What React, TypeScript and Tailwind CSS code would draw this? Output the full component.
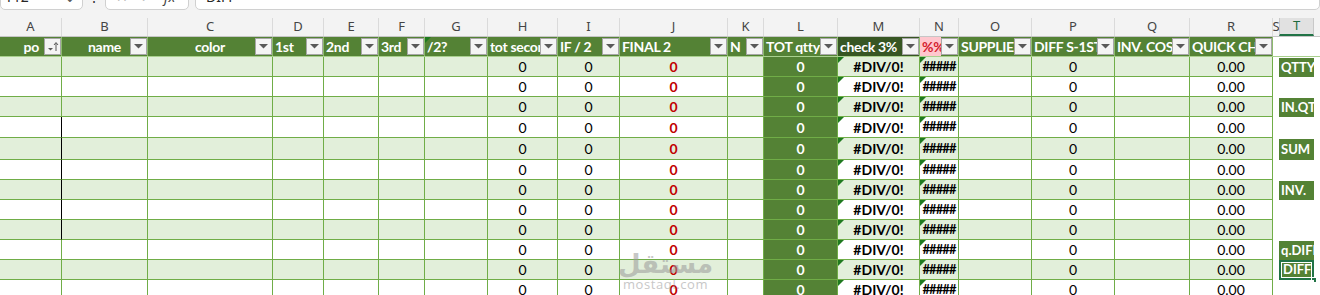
import React from 'react';

type Col = {
  letter: string;
  w: string;
  head: string;
  align: 'left' | 'center' | 'right';
  sort?: boolean;
  tri?: boolean;
  tone?: 'dark' | 'bad';
};

const cols: Col[] = [
  { letter: 'A', w: 'w-[62px]', head: 'po', align: 'right', sort: true },
  { letter: 'B', w: 'w-[86px]', head: 'name', align: 'center' },
  { letter: 'C', w: 'w-[125px]', head: 'color', align: 'center' },
  { letter: 'D', w: 'w-[51px]', head: '1st', align: 'left' },
  { letter: 'E', w: 'w-[55px]', head: '2nd', align: 'left' },
  { letter: 'F', w: 'w-[46px]', head: '3rd', align: 'left' },
  { letter: 'G', w: 'w-[63px]', head: '/2?', align: 'left', tri: true },
  { letter: 'H', w: 'w-[70px]', head: 'tot second', align: 'left' },
  { letter: 'I', w: 'w-[62px]', head: 'IF / 2', align: 'left' },
  { letter: 'J', w: 'w-[108px]', head: 'FINAL 2', align: 'left' },
  { letter: 'K', w: 'w-[36px]', head: 'N', align: 'left' },
  { letter: 'L', w: 'w-[74px]', head: 'TOT qtty', align: 'left' },
  { letter: 'M', w: 'w-[82px]', head: 'check 3%', align: 'left', tone: 'dark' },
  { letter: 'N', w: 'w-[39px]', head: '%%', align: 'left', tone: 'bad' },
  { letter: 'O', w: 'w-[73px]', head: 'SUPPLIER', align: 'left' },
  { letter: 'P', w: 'w-[83px]', head: 'DIFF S-1ST', align: 'left' },
  { letter: 'Q', w: 'w-[75px]', head: 'INV. COST', align: 'left' },
  { letter: 'R', w: 'w-[83px]', head: 'QUICK CHECK', align: 'left' },
];

const rowH = ['h-[20px]', 'h-[20px]', 'h-[20px]', 'h-[21px]', 'h-[22px]', 'h-[20px]', 'h-[20px]', 'h-[20px]', 'h-[20px]', 'h-[20px]', 'h-[20px]', 'h-[20px]'];

// labels sitting in column T, outside the table
const sideLabels: Record<number, string> = { 0: 'QTTY', 2: 'IN.QT', 4: 'SUM', 6: 'INV.', 9: 'q.DIFF', 10: 'DIFF' };

const ErrTri = () => (
  <svg className="absolute left-0 top-0" width="6" height="6" viewBox="0 0 6 6">
    <path d="M0 0H6L0 6Z" fill="#1f7a1f" />
  </svg>
);

const FilterBtn = ({ sort }: { sort?: boolean }) => (
  <span className="w-[17px] h-[17px] shrink-0 border border-[#a6a6a6] bg-[#f4f4f4] flex items-center justify-center">
    {sort ? (
      <svg width="12" height="11" viewBox="0 0 12 11">
        <path d="M1 7H6L3.5 9.5Z" fill="#595959" />
        <path d="M9 10V2M7 4L9 1.5L11 4" stroke="#595959" strokeWidth="1" fill="none" />
      </svg>
    ) : (
      <svg width="9" height="5" viewBox="0 0 9 5">
        <path d="M0 0H9L4.5 4.5Z" fill="#595959" />
      </svg>
    )}
  </span>
);

const HeaderCell = ({ c }: { c: Col }) => {
  const bg = c.tone === 'dark' ? 'bg-[#375623]' : 'bg-[#548235]';
  const alignCls = c.align === 'center' ? 'text-center pl-[17px]' : c.align === 'right' ? 'text-right pr-[5px]' : 'text-left pl-[2px]';
  return (
    <div className={`${c.w} ${bg} relative shrink-0 h-full flex items-center border-r border-[#8dbb6d]`}>
      {c.tri && <ErrTri />}
      <span
        className={`flex-1 min-w-0 overflow-hidden whitespace-nowrap ${alignCls} ${
          c.tone === 'bad' ? 'bg-[#ffc7ce] text-[#d4202e] self-stretch flex items-center' : 'text-white'
        }`}
      >
        {c.head}
      </span>
      <FilterBtn sort={c.sort} />
    </div>
  );
};

const cellValue = (letter: string) => {
  switch (letter) {
    case 'H':
    case 'I':
    case 'P':
      return <span>0</span>;
    case 'J':
      return <span className="font-bold text-[#c00000]">0</span>;
    case 'L':
      return <span className="font-bold text-white">0</span>;
    case 'M':
      return <span className="font-bold">#DIV/0!</span>;
    case 'N':
      return <span className="font-bold text-[13px] tracking-[-0.9px]">#####</span>;
    case 'R':
      return <span>0.00</span>;
    default:
      return null;
  }
};

const DataRow = ({ i }: { i: number }) => {
  const band = i % 2 === 0 ? 'bg-[#e2efda]' : 'bg-white';
  const label = sideLabels[i];
  const selected = i === 10;
  return (
    <div className={`flex ${rowH[i]} shrink-0`}>
      {cols.map((c) => {
        const bg = c.letter === 'L' ? 'bg-[#548235]' : band;
        const edge = c.letter === 'A' && i >= 3 && i <= 8 ? 'border-r-black' : 'border-r-[#70ad47]';
        return (
          <div
            key={c.letter}
            className={`${c.w} ${bg} relative shrink-0 border-r border-b border-b-[#70ad47] ${edge} flex items-center justify-center text-black`}
          >
            {(c.letter === 'M' || c.letter === 'N') && <ErrTri />}
            {cellValue(c.letter)}
          </div>
        );
      })}
      <div className="w-[6px] shrink-0 bg-white" />
      <div className="w-[35px] shrink-0 bg-white relative text-[13px]">
        {label && !selected && (
          <div className="mt-[1px] h-[calc(100%-1px)] bg-[#548235] text-white font-bold pl-[2px] flex items-center overflow-hidden whitespace-nowrap">
            {label}
          </div>
        )}
        {selected && (
          <div className="h-full border-2 border-[#217346] p-[1px] bg-white">
            <div className="h-full bg-[#548235] text-white font-bold pl-[1px] flex items-center overflow-hidden whitespace-nowrap">
              {label}
            </div>
            <span className="absolute -right-[3px] -bottom-[3px] w-[6px] h-[6px] bg-[#217346] border border-white" />
          </div>
        )}
      </div>
      <div className="flex-1 bg-white" />
    </div>
  );
};

export default function App() {
  return (
    <div className="w-[1320px] h-[295px] overflow-hidden bg-white flex flex-col relative font-['Lato','Liberation_Sans',sans-serif] text-[14px] text-black">
      {/* formula bar, scrolled mostly out of view */}
      <div className="h-[18px] shrink-0 bg-[#f3f3f3] overflow-hidden">
        <div className="flex items-start -mt-[17px] h-[27px] text-[14px] text-[#262626] font-['Noto_Sans',sans-serif]">
          <div className="w-[83px] h-full bg-white border border-[#d0d0d0] rounded-[5px] flex items-center justify-between pl-[4px] pr-[6px]">
            <span>T12</span>
            <span className="text-[#555]">⌄</span>
          </div>
          <div className="w-[22px] h-full flex items-center justify-center text-[#333]">⋮</div>
          <div className="w-[84px] h-full bg-white border border-[#d0d0d0] rounded-[5px] flex items-center gap-[12px] pl-[10px] text-[#aaa]">
            <span>✕</span>
            <span>✓</span>
            <span className="italic text-[#444]">fx</span>
          </div>
          <div className="flex-1 ml-[6px] h-full bg-white border border-[#d0d0d0] rounded-[5px] flex items-center pl-[10px]">
            DIFF
          </div>
        </div>
      </div>

      {/* column letters */}
      <div className="flex h-[19px] shrink-0 bg-[#f3f3f3] border-b border-[#c6c6c6] text-[13px] text-[#444] font-['Noto_Sans',sans-serif]">
        {cols.map((c) => (
          <div key={c.letter} className={`${c.w} shrink-0 border-r border-[#dadada] flex items-center justify-center`}>
            {c.letter}
          </div>
        ))}
        <div className="w-[6px] shrink-0 flex items-center justify-center">S</div>
        <div className="w-[35px] shrink-0 bg-[#e1e1e1] border-x border-[#c8c8c8] border-b-2 border-b-[#217346] flex items-center justify-center text-[#1e6b3d]">
          T
        </div>
        <div className="flex-1" />
      </div>

      {/* table header */}
      <div className="flex h-[20px] shrink-0 border-b border-[#a9d08e] font-bold text-[14px] tracking-[-0.3px]">
        {cols.map((c) => (
          <HeaderCell key={c.letter} c={c} />
        ))}
        <div className="flex-1 bg-white" />
      </div>

      {rowH.map((_, i) => (
        <DataRow key={i} i={i} />
      ))}

      {/* site watermark */}
      <div className="absolute left-[618px] top-[250px] flex flex-col items-center text-[#9a9a9a] opacity-55 pointer-events-none">
        <span className="font-['DejaVu_Sans',sans-serif] font-bold text-[26px] leading-[28px]">مستقل</span>
        <span className="font-['Open_Sans',sans-serif] text-[13px] leading-[12px] tracking-[0.6px]">mostaql.com</span>
      </div>
    </div>
  );
}
